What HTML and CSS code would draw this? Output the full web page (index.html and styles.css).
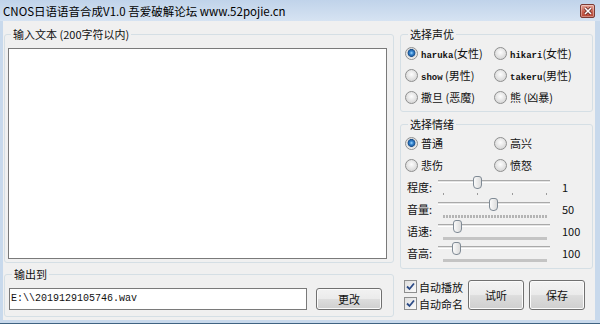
FILE: index.html
```html
<!DOCTYPE html>
<html lang="zh-CN">
<head>
    <meta charset="UTF-8">
    <title>CNOS日语语音合成V1.0</title>
    <link rel="stylesheet" href="styles.css">
</head>
<body>
<div class="window">
    <div class="titlebar">
        <span class="title">CNOS日语语音合成V1.0 吾爱破解论坛 www.52pojie.cn</span>
        <span class="closeBtn">
            <svg width="8" height="8" viewBox="0 0 8 8"><path d="M1 1 L7 7 M7 1 L1 7" stroke="#5a1d18" stroke-width="3"/><path d="M1 1 L7 7 M7 1 L1 7" stroke="#fff" stroke-width="1.6"/></svg>
        </span>
    </div>
    <div class="frame">
        <div class="client">
            <div class="leftCol">
                <fieldset class="group inputGroup">
                    <legend>输入文本 (200字符以内)</legend>
                    <textarea class="textBox"></textarea>
                </fieldset>
                <fieldset class="group outputGroup">
                    <legend>输出到</legend>
                    <div class="outputRow">
                        <div class="pathBox">E:\\2019129105746.wav</div>
                        <button class="btn btnChange">更改</button>
                    </div>
                </fieldset>
            </div>

            <div class="rightCol">
                <fieldset class="group voiceGroup">
                    <legend>选择声优</legend>
                    <div class="radioGrid">
                        <label class="radio checked"><span class="dot"></span><span><span class="en">haruka</span>(女性)</span></label>
                        <label class="radio"><span class="dot"></span><span><span class="en">hikari</span>(女性)</span></label>
                        <label class="radio"><span class="dot"></span><span><span class="en">show</span> (男性)</span></label>
                        <label class="radio"><span class="dot"></span><span><span class="en">takeru</span>(男性)</span></label>
                        <label class="radio"><span class="dot"></span><span>撒旦 (恶魔)</span></label>
                        <label class="radio"><span class="dot"></span><span>熊 (凶暴)</span></label>
                    </div>
                </fieldset>

                <fieldset class="group moodGroup">
                    <legend>选择情绪</legend>
                    <div class="radioGrid">
                        <label class="radio checked"><span class="dot"></span><span>普通</span></label>
                        <label class="radio"><span class="dot"></span><span>高兴</span></label>
                        <label class="radio"><span class="dot"></span><span>悲伤</span></label>
                        <label class="radio"><span class="dot"></span><span>愤怒</span></label>
                    </div>

                    <div class="sliderRow">
                        <span class="sliderLabel">程度:</span>
                        <div class="slider">
                            <div class="groove"></div>
                            <div class="thumb" style="left: 35px"></div>
                            <div class="ticks sparse"><i></i><i></i><i></i><i></i></div>
                        </div>
                        <span class="sliderValue">1</span>
                    </div>
                    <div class="sliderRow">
                        <span class="sliderLabel">音量:</span>
                        <div class="slider">
                            <div class="groove"></div>
                            <div class="thumb" style="left: 51px"></div>
                            <div class="ticks dotted"></div>
                        </div>
                        <span class="sliderValue">50</span>
                    </div>
                    <div class="sliderRow">
                        <span class="sliderLabel">语速:</span>
                        <div class="slider">
                            <div class="groove"></div>
                            <div class="thumb" style="left: 15px"></div>
                            <div class="ticks solid"></div>
                        </div>
                        <span class="sliderValue">100</span>
                    </div>
                    <div class="sliderRow">
                        <span class="sliderLabel">音高:</span>
                        <div class="slider">
                            <div class="groove"></div>
                            <div class="thumb" style="left: 14px"></div>
                            <div class="ticks solid"></div>
                        </div>
                        <span class="sliderValue">100</span>
                    </div>
                </fieldset>

                <div class="actions">
                    <div class="checks">
                        <label class="check">
                            <span class="box"><svg width="11" height="11" viewBox="0 0 11 11"><path d="M2 5.5 L4.5 8 L9 2.5" fill="none" stroke="#2b4a86" stroke-width="1.8"/></svg></span>
                            自动播放
                        </label>
                        <label class="check">
                            <span class="box"><svg width="11" height="11" viewBox="0 0 11 11"><path d="M2 5.5 L4.5 8 L9 2.5" fill="none" stroke="#2b4a86" stroke-width="1.8"/></svg></span>
                            自动命名
                        </label>
                    </div>
                    <button class="btn btnBig">试听</button>
                    <button class="btn btnBig">保存</button>
                </div>
            </div>
        </div>
    </div>
</div>
</body>
</html>
```

FILE: styles.css
```css
* {
    box-sizing: border-box;
}
body {
    margin: 0;
    font: 11px/14px "Noto Sans CJK SC", "Liberation Sans", sans-serif;
    color: #111;
    background: #fff;
}
.window {
    width: 600px;
    height: 324px;
    display: flex;
    flex-direction: column;
}
.titlebar {
    height: 21px;
    flex: none;
    display: flex;
    align-items: center;
    justify-content: space-between;
    padding: 0 5px 0 3px;
    background: linear-gradient(#c0d3ea, #d6e3f2);
}
.title {
    font-size: 11.5px;
    color: #000;
}
.closeBtn {
    width: 15px;
    height: 14px;
    display: flex;
    align-items: center;
    justify-content: center;
    border: 1px solid #7b3b34;
    border-radius: 2px;
    background: linear-gradient(#e5a396, #c8604f 55%, #b84634);
    box-shadow: inset 0 0 0 1px rgba(255, 255, 255, 0.35);
    margin-top: 1px;
}
.frame {
    flex: 1;
    display: flex;
    padding: 0 5px 3px 3px;
    background: #c8d9ec;
    border-bottom: 1px solid #3f6382;
}
.client {
    flex: 1;
    display: flex;
    gap: 6px;
    padding: 6px 2px 0 1px;
    background: #f0f0f0;
}
.leftCol {
    width: 390px;
    display: flex;
    flex-direction: column;
}
.rightCol {
    flex: 1;
    display: flex;
    flex-direction: column;
}
.group {
    margin: 0;
    min-width: 0;
    border: 1px solid #d5dfe5;
    border-radius: 3px;
}
.group legend {
    margin-left: 3px;
    padding: 0 2px;
    line-height: 14px;
}
.inputGroup {
    padding: 7px 3px 3px 3px;
}
.textBox {
    display: block;
    width: 379px;
    height: 211px;
    margin: 0;
    border: 1px solid #7a7a7a;
    background: #fff;
    resize: none;
}
.outputGroup {
    margin-top: 4px;
    padding: 7px 4px 6px 4px;
}
.outputRow {
    display: flex;
    align-items: center;
}
.pathBox {
    width: 298px;
    height: 22px;
    border: 1px solid #7a7a7a;
    background: #fff;
    padding-left: 1px;
    font: 10px/20px "Liberation Mono", monospace;
}
.btn {
    font: 11px/14px "Noto Sans CJK SC", sans-serif;
    color: #111;
    border: 1px solid #707070;
    border-radius: 3px;
    background: linear-gradient(#f2f2f2 0%, #ebebeb 48%, #dddddd 52%, #cfcfcf 100%);
    box-shadow: inset 0 0 0 1px #fbfbfb;
    padding: 0;
}
.btnChange {
    width: 66px;
    height: 22px;
    margin-left: 9px;
}
.voiceGroup {
    padding: 1px 2px 3px 4px;
}
.moodGroup {
    margin-top: 5px;
    padding: 1px 2px 4px 4px;
}
.radioGrid {
    display: grid;
    grid-template-columns: 89px 1fr;
}
.radio {
    display: flex;
    align-items: center;
    height: 22px;
    white-space: nowrap;
}
.dot {
    width: 13px;
    height: 13px;
    flex: none;
    margin-right: 3px;
    border-radius: 50%;
    border: 1px solid #8e8f8f;
    background: radial-gradient(circle at 50% 40%, #fdfdfd, #d8d8d8 75%);
}
.radio.checked .dot {
    background: radial-gradient(circle at 50% 45%, #a8dcff 0, #3b8cd6 1.6px, #1a4f8c 3.6px, #d8d8d8 4.2px, #f6f6f6 6px);
}
.en {
    font: bold 9px "Liberation Mono", monospace;
}
.sliderRow {
    display: flex;
    height: 22px;
    padding-left: 2px;
}
.sliderLabel {
    width: 31px;
    line-height: 22px;
}
.slider {
    position: relative;
    width: 112px;
    display: flex;
    flex-direction: column;
}
.groove {
    margin-top: 4px;
    height: 3px;
    border-top: 1px solid #a9a9a9;
    border-bottom: 1px solid #ffffff;
    background: #e4e4e4;
}
.thumb {
    position: absolute;
    top: 0;
    width: 9px;
    height: 13px;
    border: 1px solid #7f8a95;
    border-radius: 3px 3px 4px 4px;
    background: linear-gradient(90deg, #fafafa, #dcdcdc);
}
.ticks {
    margin: 10px 0 0 5px;
    width: 104px;
    height: 2px;
}
.ticks.sparse {
    display: flex;
    justify-content: space-between;
}
.ticks.sparse i {
    width: 1px;
    height: 2px;
    background: #9a9a9a;
}
.ticks.dotted {
    height: 3px;
    background: repeating-linear-gradient(90deg, #b4b4b4 0 2px, transparent 2px 3px);
}
.ticks.solid {
    height: 3px;
    background: #c4c4c4;
}
.sliderValue {
    margin-left: 12px;
    line-height: 22px;
}
.actions {
    margin-top: 9px;
    display: flex;
    align-items: center;
    padding-left: 4px;
}
.checks {
    width: 64px;
    display: flex;
    flex-direction: column;
}
.check {
    display: flex;
    align-items: center;
    height: 17px;
    white-space: nowrap;
}
.box {
    width: 13px;
    height: 13px;
    flex: none;
    margin-right: 2px;
    border: 1px solid #8e8f8f;
    background: linear-gradient(135deg, #dedede, #fbfbfb);
    display: flex;
    align-items: center;
    justify-content: center;
}
.btnBig {
    width: 56px;
    height: 30px;
    margin-right: 5px;
}
```
